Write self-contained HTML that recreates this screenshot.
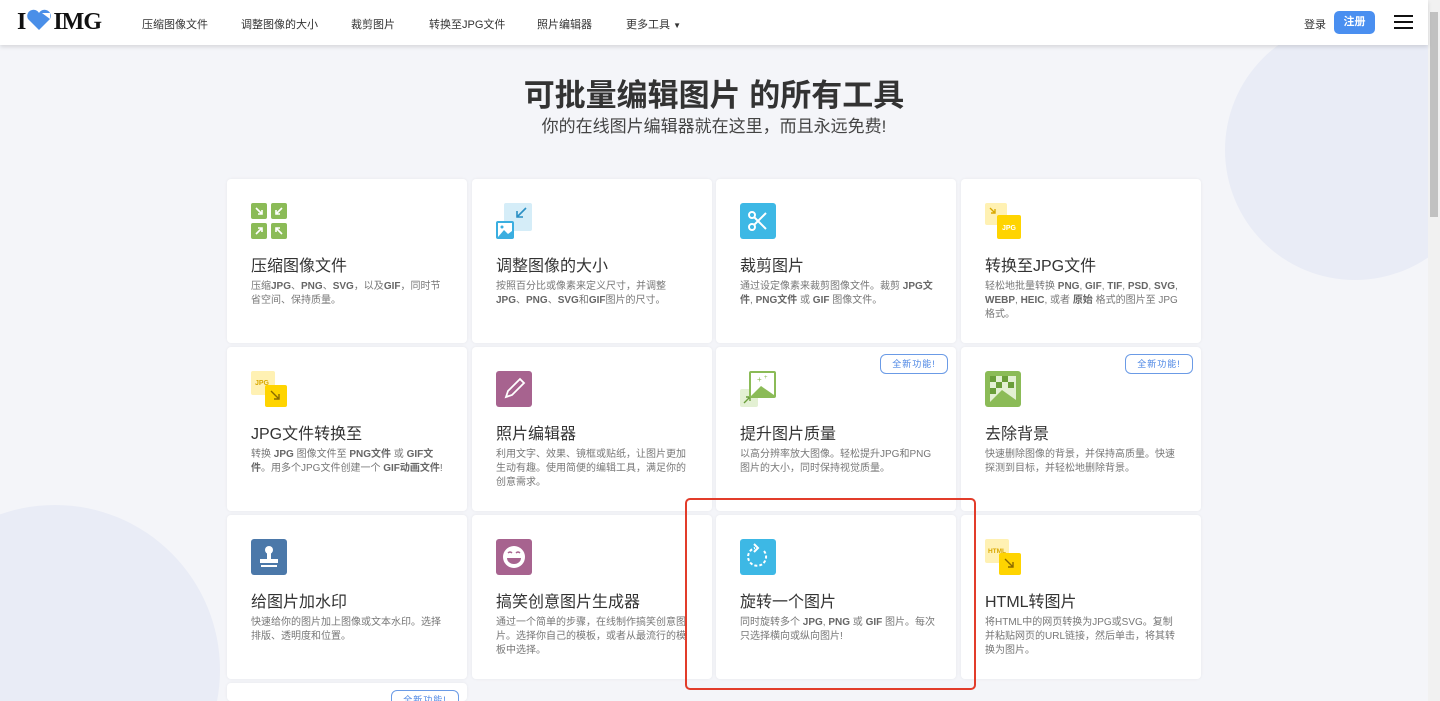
<!DOCTYPE html>
<html><head><meta charset="utf-8"><style>
*{margin:0;padding:0;box-sizing:border-box}
html,body{width:1440px;height:701px;overflow:hidden}
body{background:#f4f5f9;font-family:"Liberation Sans","Noto Sans CJK SC",sans-serif;position:relative;color:#383e45}
.hdr{position:absolute;left:0;top:0;width:1428px;height:45px;background:#fff;box-shadow:0 2px 4px rgba(0,0,0,.12);z-index:5}
.logo{position:absolute;left:17px;top:9px;font-family:"Liberation Serif",serif;font-weight:bold;font-size:24px;color:#111;letter-spacing:-1px}
.nav{position:absolute;top:16px;font-size:11px;color:#333}
.sb{position:absolute;right:0;top:0;width:12px;height:701px;background:#f1f1f1}
.sb div{position:absolute;left:2px;top:12px;width:8px;height:205px;background:#c1c1c1}
.circ{position:absolute;border-radius:50%;background:#e9ecf6}
h1{position:absolute;top:70px;left:0;width:1428px;text-align:center;font-size:31px;font-weight:bold;color:#333}
h2{position:absolute;top:112px;left:0;width:1428px;text-align:center;font-size:17px;font-weight:normal;color:#444}
.card{position:absolute;width:240px;height:164px;background:#fff;border-radius:4px;box-shadow:0 0 3px rgba(0,0,0,.06);overflow:hidden}
.card .ic{position:absolute;left:24px;top:24px;width:36px;height:36px}
.card .t{position:absolute;left:24px;top:73px;font-size:16px;color:#333}
.card .d{position:absolute;left:24px;top:101px;width:196px;font-size:10px;line-height:14px;color:#777}
.card .d b{color:#666}
.badge{position:absolute;right:8px;top:7px;width:68px;height:20px;border:1px solid #6b9be6;border-radius:6px;color:#4c86e4;font-size:9px;text-align:center;line-height:18px;letter-spacing:1px}
.red{position:absolute;left:685px;top:498px;width:291px;height:192px;border:2px solid #e23c2a;border-radius:5px;z-index:3}
</style></head><body>
<div class="circ" style="left:1225px;top:20px;width:260px;height:260px"></div>
<div class="circ" style="left:-110px;top:505px;width:330px;height:330px"></div>
<div class="hdr">
<div class="logo">I<svg width="26" height="22" viewBox="0 0 26 22" style="vertical-align:-2px;margin:0 1px"><path d="M13 21 L2 10 A6 6 0 0 1 13 4 A6 6 0 0 1 24 10 Z" fill="#4a8fe8"/><path d="M16 4 L24 4 L24 10 Z" fill="#fff"/></svg>IMG</div>
<div class="nav" style="left:142px">压缩图像文件</div>
<div class="nav" style="left:241px">调整图像的大小</div>
<div class="nav" style="left:351px">裁剪图片</div>
<div class="nav" style="left:429px">转换至JPG文件</div>
<div class="nav" style="left:537px">照片编辑器</div>
<div class="nav" style="left:626px">更多工具 <span style="font-size:8px">▼</span></div>
<div class="nav" style="left:1304px">登录</div>
<div style="position:absolute;left:1334px;top:11px;width:41px;height:23px;background:#4a8ff0;border-radius:5px;color:#fff;font-size:11px;font-weight:bold;text-align:center;line-height:23px">注册</div>
<div style="position:absolute;left:1394px;top:15px;width:19px;height:2px;background:#111;box-shadow:0 6px 0 #111,0 12px 0 #111"></div>
</div>
<div class="sb"><div></div></div>
<h1>可批量编辑图片 的所有工具</h1>
<h2>你的在线图片编辑器就在这里，而且永远免费!</h2>

<div class="card" style="left:227px;top:179px"><svg class="ic" viewBox="0 0 36 36"><rect x="0" y="0" width="16" height="16" rx="2" fill="#8bbb57"/><rect x="20" y="0" width="16" height="16" rx="2" fill="#8bbb57"/><rect x="0" y="20" width="16" height="16" rx="2" fill="#8bbb57"/><rect x="20" y="20" width="16" height="16" rx="2" fill="#8bbb57"/><g stroke="#fff" stroke-width="1.6" fill="none"><path d="M5 5l6 6M7 11h4V7"/><path d="M31 5l-6 6M25 7v4h4"/><path d="M5 31l6-6M7 25h4v4"/><path d="M31 31l-6-6M25 29v-4h4"/></g></svg><div class="t">压缩图像文件</div><div class="d">压缩<b>JPG</b>、<b>PNG</b>、<b>SVG</b>，以及<b>GIF</b>，同时节省空间、保持质量。</div></div>
<div class="card" style="left:472px;top:179px"><svg class="ic" viewBox="0 0 36 36"><rect x="8" y="0" width="28" height="28" rx="2" fill="#d5edf8"/><path d="M30 5l-9 9M21 8v6h6" stroke="#2a8fc4" stroke-width="1.6" fill="none"/><rect x="0" y="18" width="18" height="18" rx="2" fill="#3aaee0"/><rect x="2" y="20" width="14" height="14" fill="#fff"/><path d="M2 34l6-7 4 4 4-3v6z" fill="#3aaee0"/><circle cx="6" cy="24" r="1.5" fill="#3aaee0"/></svg><div class="t">调整图像的大小</div><div class="d">按照百分比或像素来定义尺寸，并调整<b>JPG</b>、<b>PNG</b>、<b>SVG</b>和<b>GIF</b>图片的尺寸。</div></div>
<div class="card" style="left:716px;top:179px"><svg class="ic" viewBox="0 0 36 36"><rect width="36" height="36" rx="3" fill="#3db8e5"/><g stroke="#fff" stroke-width="2" fill="none"><circle cx="12" cy="12" r="3"/><circle cx="12" cy="24" r="3"/><path d="M14 14l12 12M14 22l12-12"/></g></svg><div class="t">裁剪图片</div><div class="d">通过设定像素来裁剪图像文件。裁剪 <b>JPG文件</b>, <b>PNG文件</b> 或 <b>GIF</b> 图像文件。</div></div>
<div class="card" style="left:961px;top:179px"><svg class="ic" viewBox="0 0 36 36"><rect x="0" y="0" width="22" height="22" rx="2" fill="#fff1b3"/><path d="M5 5l5 5M6 10h4V6" stroke="#d9a800" stroke-width="1.4" fill="none"/><rect x="12" y="12" width="24" height="24" rx="2" fill="#ffd400"/><text x="24" y="27" font-size="7" font-weight="bold" fill="#fff" text-anchor="middle" font-family="Liberation Sans">JPG</text></svg><div class="t">转换至JPG文件</div><div class="d">轻松地批量转换 <b>PNG</b>, <b>GIF</b>, <b>TIF</b>, <b>PSD</b>, <b>SVG</b>, <b>WEBP</b>, <b>HEIC</b>, 或者 <b>原始</b> 格式的图片至 JPG 格式。</div></div>

<div class="card" style="left:227px;top:347px"><svg class="ic" viewBox="0 0 36 36"><rect x="0" y="0" width="24" height="24" rx="2" fill="#fff1b3"/><text x="11" y="14" font-size="7" font-weight="bold" fill="#d9a800" text-anchor="middle" font-family="Liberation Sans">JPG</text><rect x="14" y="14" width="22" height="22" rx="2" fill="#ffd400"/><path d="M20 20l8 8M23 28h5v-5" stroke="#8a6a00" stroke-width="1.4" fill="none"/></svg><div class="t">JPG文件转换至</div><div class="d">转换 <b>JPG</b> 图像文件至 <b>PNG文件</b> 或 <b>GIF文件</b>。用多个JPG文件创建一个 <b>GIF动画文件</b>!</div></div>
<div class="card" style="left:472px;top:347px"><svg class="ic" viewBox="0 0 36 36"><rect width="36" height="36" rx="3" fill="#a7638f"/><path d="M10 26l2-6 12-12 4 4-12 12z" stroke="#fff" stroke-width="1.8" fill="none"/></svg><div class="t">照片编辑器</div><div class="d">利用文字、效果、镜框或贴纸，让图片更加生动有趣。使用简便的编辑工具，满足你的创意需求。</div></div>
<div class="card" style="left:716px;top:347px"><div class="badge">全新功能!</div><svg class="ic" viewBox="0 0 36 36"><rect x="0" y="18" width="18" height="18" rx="2" fill="#e3f0d3"/><path d="M4 32l6-6M6 26h4v4" stroke="#6a9e3a" stroke-width="1.4" fill="none"/><rect x="9" y="0" width="27" height="27" rx="2" fill="#8bbb57"/><rect x="11" y="2" width="23" height="23" fill="#fff"/><path d="M11 25l10-10 13 9v1z" fill="#8bbb57"/><text x="17" y="11" font-size="8" fill="#8bbb57">+</text><text x="24" y="8" font-size="6" fill="#8bbb57">+</text></svg><div class="t">提升图片质量</div><div class="d">以高分辨率放大图像。轻松提升JPG和PNG图片的大小，同时保持视觉质量。</div></div>
<div class="card" style="left:961px;top:347px"><div class="badge">全新功能!</div><svg class="ic" viewBox="0 0 36 36"><rect width="36" height="36" rx="3" fill="#8bbb57"/><rect x="5" y="5" width="26" height="26" fill="#e3f0d3"/><path d="M5 5h6v6H5zM17 5h6v6h-6zM11 11h6v6h-6zM23 11h6v6h-6zM5 17h6v6H5z" fill="#6a9e3a"/><path d="M5 31l12-12 14 10v2z" fill="#8bbb57"/></svg><div class="t">去除背景</div><div class="d">快速删除图像的背景，并保持高质量。快速探测到目标，并轻松地删除背景。</div></div>

<div class="card" style="left:227px;top:515px"><svg class="ic" viewBox="0 0 36 36"><rect width="36" height="36" rx="3" fill="#4b78a9"/><circle cx="18" cy="11" r="4" fill="#fff"/><rect x="16" y="14" width="4" height="6" fill="#fff"/><rect x="9" y="20" width="18" height="4" fill="#fff"/><rect x="10" y="26" width="16" height="2" fill="#fff"/></svg><div class="t">给图片加水印</div><div class="d">快速给你的图片加上图像或文本水印。选择排版、透明度和位置。</div></div>
<div class="card" style="left:472px;top:515px"><svg class="ic" viewBox="0 0 36 36"><rect width="36" height="36" rx="3" fill="#a7638f"/><circle cx="18" cy="18" r="11" fill="#fff"/><path d="M11 19h14a7 6 0 0 1-14 0z" fill="#a7638f"/><path d="M12 14q2-2 4 0M20 14q2-2 4 0" stroke="#a7638f" stroke-width="1.4" fill="none"/></svg><div class="t">搞笑创意图片生成器</div><div class="d">通过一个简单的步骤，在线制作搞笑创意图片。选择你自己的模板，或者从最流行的模板中选择。</div></div>
<div class="card" style="left:716px;top:515px"><svg class="ic" viewBox="0 0 36 36"><rect width="36" height="36" rx="3" fill="#3db8e5"/><path d="M24 12a9 9 0 1 1-9-3" stroke="#fff" stroke-width="2" fill="none" stroke-dasharray="3 2"/><path d="M14 5l4 4-4 4" stroke="#fff" stroke-width="2" fill="none"/></svg><div class="t">旋转一个图片</div><div class="d">同时旋转多个 <b>JPG</b>, <b>PNG</b> 或 <b>GIF</b> 图片。每次只选择横向或纵向图片!</div></div>
<div class="card" style="left:961px;top:515px"><svg class="ic" viewBox="0 0 36 36"><rect x="0" y="0" width="24" height="24" rx="2" fill="#fff1b3"/><text x="12" y="14" font-size="6.5" font-weight="bold" fill="#d9a800" text-anchor="middle" font-family="Liberation Sans">HTML</text><rect x="14" y="14" width="22" height="22" rx="2" fill="#ffd400"/><path d="M20 20l8 8M23 28h5v-5" stroke="#8a6a00" stroke-width="1.4" fill="none"/></svg><div class="t">HTML转图片</div><div class="d">将HTML中的网页转换为JPG或SVG。复制并粘贴网页的URL链接，然后单击，将其转换为图片。</div></div>

<div class="card" style="left:227px;top:683px;height:18px"><div class="badge">全新功能!</div></div>
<div class="red"></div>
</body></html>
